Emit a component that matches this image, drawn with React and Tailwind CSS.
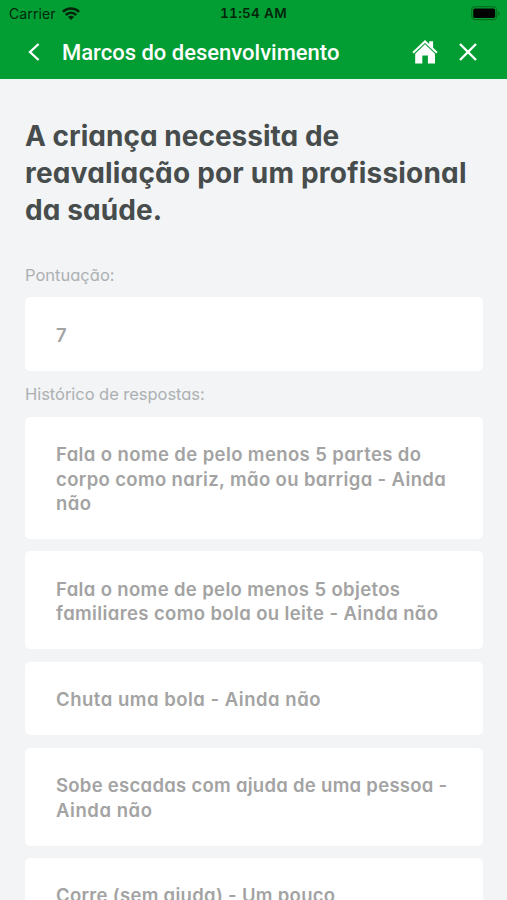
const answers = [
  {
    id: "partes",
    lines: [
      ["Fala o nome de pelo menos 5 partes do", "tracking-[0.39px]"],
      ["corpo como nariz, mão ou barriga - Ainda", "tracking-[0.36px]"],
      ["não", "tracking-[0.5px]"],
    ],
  },
  {
    id: "objetos",
    lines: [
      ["Fala o nome de pelo menos 5 objetos", "tracking-[0.36px]"],
      ["familiares como bola ou leite - Ainda não", "tracking-[0.38px]"],
    ],
  },
  { id: "bola", lines: [["Chuta uma bola - Ainda não", "tracking-[0.51px]"]] },
  {
    id: "escadas",
    lines: [
      ["Sobe escadas com ajuda de uma pessoa -", "tracking-[0.28px]"],
      ["Ainda não", "tracking-[0.55px]"],
    ],
  },
  { id: "corre", lines: [["Corre (sem ajuda) - Um pouco", "tracking-[0.3px]"]] },
];

function WifiIcon() {
  return (
    <svg width="18" height="13" viewBox="0 0 18 13" fill="none" stroke="#04250c" strokeWidth="2.5">
      <path d="M.9 4.9a11.4 11.4 0 0 1 16.2 0" />
      <path d="M3.8 8a7.3 7.3 0 0 1 10.4 0" />
      <path d="M9 12.9 6 9.9a4.2 4.2 0 0 1 6 0Z" fill="#04250c" stroke="none" />
    </svg>
  );
}

function BatteryIcon() {
  return (
    <svg width="30" height="15" viewBox="0 0 30 15">
      <rect x="0.7" y="0.7" width="25" height="13" rx="3.6" fill="none" stroke="#05701f" strokeWidth="1.2" />
      <rect x="2.2" y="2.6" width="22" height="9.4" rx="1.8" fill="#000" />
      <path d="M27.2 5.2c2 .8 2 3.8 0 4.6Z" fill="#05701f" />
    </svg>
  );
}

function HomeIcon() {
  return (
    <svg width="26" height="24" viewBox="0 0 26 24" fill="#fff">
      <path d="M13 0 17.2 4V1.2h3.9v6.5l4.5 4.3-1.3 1.5L13 2.9 1.7 13.5.4 12Z" />
      <path d="M13 4.3 23 13.7V23.5H15.9V15.6H10.3V23.5H3.2V13.7Z" />
    </svg>
  );
}

function AnswerCard({ lines }) {
  return (
    <div className="rounded-[5px] bg-white px-[31px] pt-[25.6px] pb-[23.6px] text-[18.5px] leading-[24.4px] font-semibold text-[#a3a3a3]">
      {lines.map(([text, tracking]) => (
        <div key={text} className={`whitespace-nowrap ${tracking}`}>
          {text}
        </div>
      ))}
    </div>
  );
}

export default function App() {
  return (
    <div className="flex h-[900px] w-full flex-col overflow-hidden bg-[#f2f4f6] font-['Inter','Liberation_Sans',sans-serif]">
      <header className="h-[79px] shrink-0 bg-[#029e33]">
        <div className="grid h-[27px] grid-cols-3 items-center text-[14px] text-[#04250c]">
          <div className="flex items-center gap-[6px] pl-[9px]">
            <span className="tracking-[0.1px]">Carrier</span>
            <WifiIcon />
          </div>
          <div className="text-center text-[13.5px] font-semibold tracking-[0.3px] tabular-nums">11:54 AM</div>
          <div className="flex justify-end pr-[6px]">
            <BatteryIcon />
          </div>
        </div>
        <div className="flex h-[50px] items-center text-white">
          <svg className="ml-[28px]" width="12" height="18" viewBox="0 0 12 18" fill="none" stroke="currentColor" strokeWidth="2.3">
            <path d="M10.6 1 2 9l8.6 8" />
          </svg>
          <h1 className="ml-[22px] flex-1 font-[Roboto] text-[22px] font-medium">Marcos do desenvolvimento</h1>
          <HomeIcon />
          <svg className="mr-[30px] ml-[21px]" width="18" height="18" viewBox="0 0 18 18" fill="none" stroke="currentColor" strokeWidth="2.4">
            <path d="m1 1 16 16M17 1 1 17" />
          </svg>
        </div>
      </header>
      <main className="flex flex-col pr-[24.5px] pl-[25px] pt-[38.6px] [font-feature-settings:'cv11']">
        <h2 className="text-[28px] leading-[37px] font-[650] whitespace-nowrap text-[#474c4c]">
          <div className="tracking-[0.02px]">A criança necessita de</div>
          <div className="tracking-[0.2px]">reavaliação por um profissional</div>
          <div className="tracking-[0.1px]">da saúde.</div>
        </h2>
        <div className="mt-[34px] text-[16.5px] leading-[24px] text-[#adb0b2]">Pontuação:</div>
        <div className="mt-[10.7px]">
          <AnswerCard lines={[["7", ""]]} />
        </div>
        <div className="mt-[11.4px] text-[16.5px] leading-[24px] tracking-[-0.04px] text-[#adb0b2]">Histórico de respostas:</div>
        <div className="mt-[10.4px] flex flex-col gap-[12.3px]">
          {answers.map((a) => (
            <AnswerCard key={a.id} lines={a.lines} />
          ))}
        </div>
      </main>
    </div>
  );
}
